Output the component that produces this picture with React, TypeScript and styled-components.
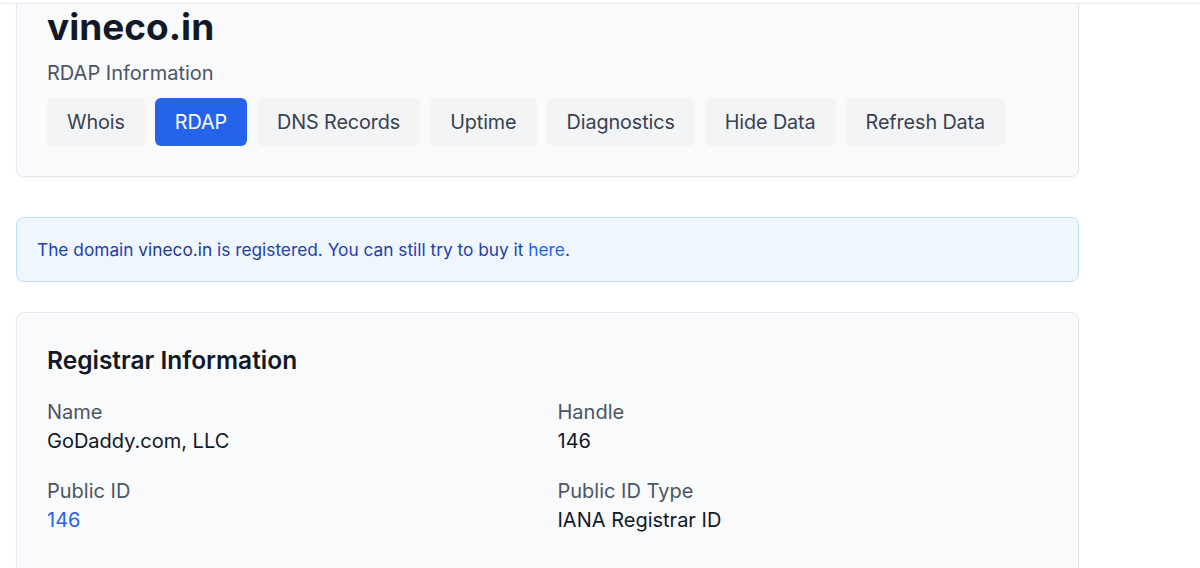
import * as React from "react";
import { useLayoutEffect, useRef } from "react";
import styled, { createGlobalStyle } from "styled-components";

const GlobalStyle = createGlobalStyle`
  html, body {
    margin: 0;
    padding: 0;
    background: #ffffff;
    font-family: Inter, "Noto Sans", sans-serif;
    color: #111827;
  }
  * { box-sizing: border-box; }
`;

const TopBar = styled.div`
  height: 4px;
  background: #ffffff;
  border-bottom: 1px solid #e5e7eb;
`;

const Scroller = styled.div`
  height: calc(100vh - 4px);
  overflow: hidden;
`;

const Main = styled.main`
  width: 1095px;
  padding: 16px 16px 200px;
  display: flex;
  flex-direction: column;
`;

const Card = styled.section<{ $gapAfter?: number; $padBottom?: number }>`
  background: #f9fafb;
  border: 1px solid #e5e7eb;
  border-radius: 8px;
  box-shadow: 0 1px 2px rgba(0, 0, 0, 0.04);
  padding: 30px;
  padding-bottom: ${(p) => p.$padBottom ?? 30}px;
  margin-bottom: ${(p) => p.$gapAfter ?? 0}px;
`;

const Title = styled.h1`
  margin: 0 0 12px;
  font-size: 37px;
  line-height: 40px;
  font-weight: 700;
  color: #111827;
`;

const Subtitle = styled.p`
  margin: 0 0 11px;
  font-size: 20px;
  line-height: 28px;
  color: #4b5563;
`;

const Tabs = styled.div`
  display: flex;
  gap: 10px;
`;

const Tab = styled.button<{ $active?: boolean }>`
  font-family: inherit;
  font-size: 19.8px;
  line-height: 28px;
  font-weight: 400;
  letter-spacing: -0.1px;
  padding: 10px 20px;
  border: none;
  border-radius: 6px;
  cursor: pointer;
  background: ${(p) => (p.$active ? "#2563eb" : "#f3f4f6")};
  color: ${(p) => (p.$active ? "#ffffff" : "#374151")};
`;

const Alert = styled.div`
  background: #eff6ff;
  border: 1px solid #bfdbfe;
  border-radius: 8px;
  padding: 20px;
  font-size: 17.3px;
  line-height: 23px;
  color: #1e40af;
  margin-bottom: 30px;
`;

const Strong = styled.span`
  color: #1e3a8a;
`;

const Link = styled.a`
  color: #2563eb;
  text-decoration: none;
`;

const SectionTitle = styled.h2`
  margin: 0 0 21px;
  font-size: 24.5px;
  line-height: 34px;
  font-weight: 600;
  color: #111827;
`;

const Grid = styled.dl`
  margin: 0;
  display: grid;
  grid-template-columns: 1fr 1fr;
  column-gap: 20px;
  row-gap: 21px;
`;

const Field = styled.div``;

const Label = styled.dt`
  font-size: 20px;
  line-height: 28px;
  color: #4b5563;
`;

const Value = styled.dd<{ $link?: boolean }>`
  margin: 0;
  font-size: 20px;
  line-height: 30px;
  font-weight: 400;
  color: ${(p) => (p.$link ? "#2563eb" : "#111827")};
`;

const tabs = ["Whois", "RDAP", "DNS Records", "Uptime", "Diagnostics", "Hide Data", "Refresh Data"];

const fields = [
  { label: "Name", value: "GoDaddy.com, LLC" },
  { label: "Handle", value: "146" },
  { label: "Public ID", value: "146", link: true },
  { label: "Public ID Type", value: "IANA Registrar ID" },
];

export default function App() {
  const scrollRef = useRef<HTMLDivElement>(null);

  useLayoutEffect(() => {
    if (scrollRef.current) scrollRef.current.scrollTop = 44;
  }, []);

  return (
    <>
      <GlobalStyle />
      <TopBar />
      <Scroller ref={scrollRef}>
        <Main>
          <Card $gapAfter={40}>
            <Title>vineco.in</Title>
            <Subtitle>RDAP Information</Subtitle>
            <Tabs>
              {tabs.map((t) => (
                <Tab key={t} $active={t === "RDAP"}>
                  {t}
                </Tab>
              ))}
            </Tabs>
          </Card>

          <Alert>
            The domain <Strong>vineco.in</Strong> is registered. You can still try to buy it{" "}
            <Link href="#">here</Link>.
          </Alert>

          <Card $padBottom={60}>
            <SectionTitle>Registrar Information</SectionTitle>
            <Grid>
              {fields.map((f) => (
                <Field key={f.label}>
                  <Label>{f.label}</Label>
                  <Value $link={f.link}>{f.value}</Value>
                </Field>
              ))}
            </Grid>
          </Card>
        </Main>
      </Scroller>
    </>
  );
}
